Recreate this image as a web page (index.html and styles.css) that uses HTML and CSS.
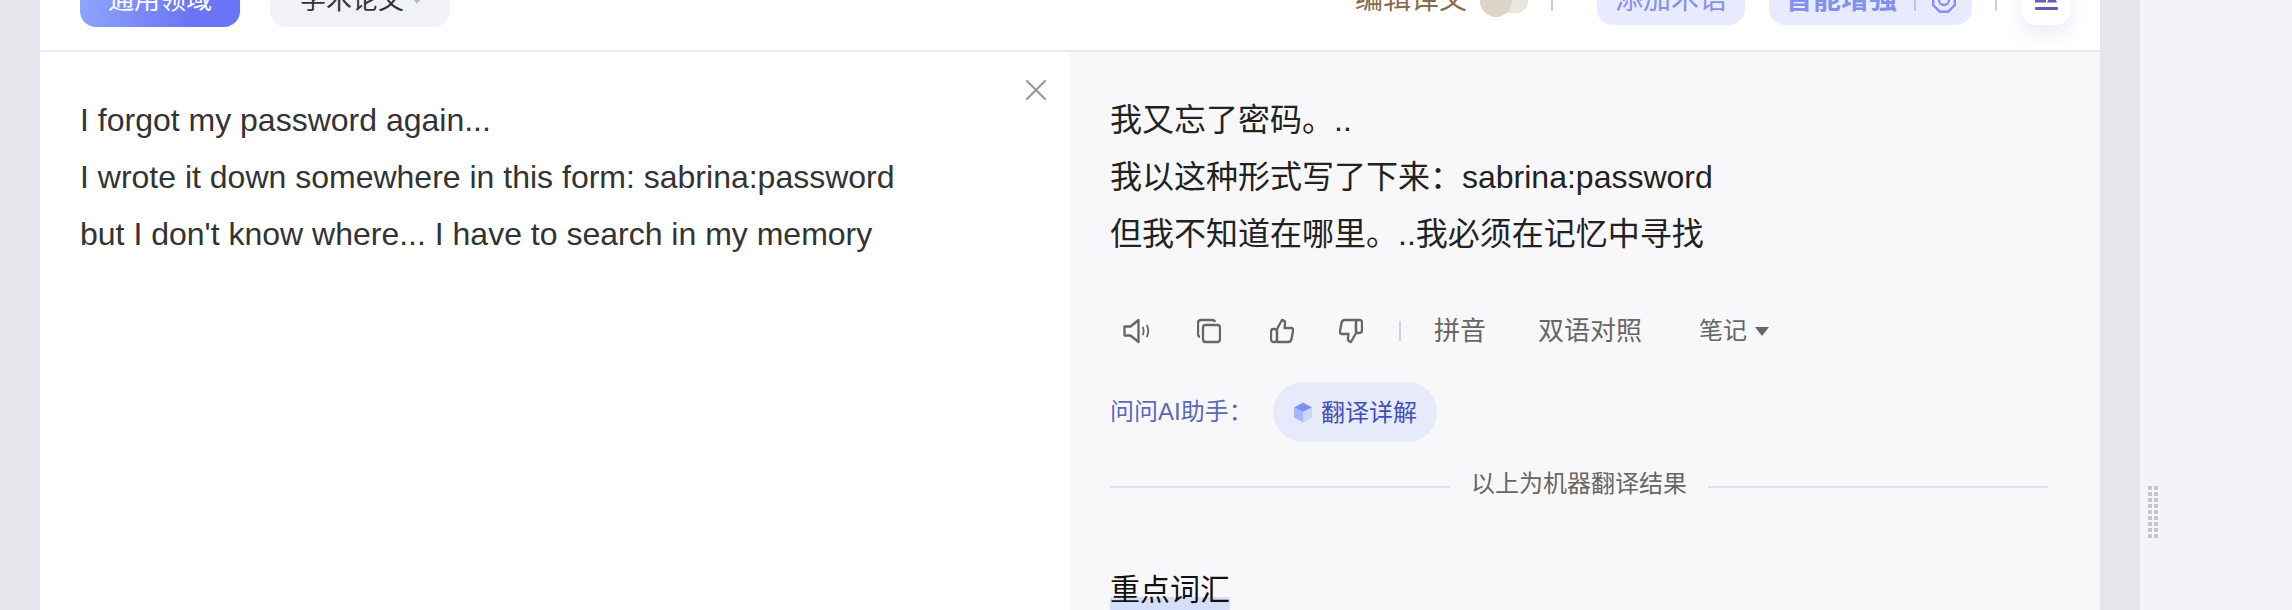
FILE: index.html
```html
<!DOCTYPE html>
<html lang="zh">
<head>
    <meta charset="UTF-8">
    <title>翻译</title>
    <link rel="stylesheet" href="styles.css">
</head>
<body>
    <div class="page">
        <div class="card">
            <div class="topbar">
                <div class="topbar-left">
                    <div class="domain-btn active">通用领域</div>
                    <div class="domain-btn">学术论文<span class="domain-arrow"></span></div>
                </div>
                <div class="topbar-right">
                    <div class="edit-label">编辑译文</div>
                    <div class="switch"><span class="switch-knob"></span></div>
                    <span class="vline first"></span>
                    <div class="pill">添加术语</div>
                    <div class="pill pill-strong">
                        <span>智能增强</span>
                        <span class="pill-sep"></span>
                        <svg class="pill-icon" width="24" height="26" viewBox="0 0 24 26" fill="none" stroke="#8391ee" stroke-width="2.400"><path d="M8 1.200h8l6.800 6.800v10L16 24.800H8L1.200 18V8z"/><circle cx="12" cy="13" r="5"/></svg>
                    </div>
                    <span class="vline"></span>
                    <div class="icon-btn">
                        <svg width="24" height="26" viewBox="0 0 24 26" fill="#5f5fb8"><path d="M18 8 13 18.500h10z"/><path d="M1 16h11v2.500H1z"/><rect x="1" y="23" width="23" height="3" rx="1"/></svg>
                    </div>
                </div>
            </div>
            <div class="panels">
                <div class="source">
                    <svg class="close-icon" width="22" height="22" viewBox="0 0 22 22" stroke="#999" stroke-width="2.200" stroke-linecap="round"><path d="M2 2 20 20M20 2 2 20"/></svg>
                    <p>I forgot my password again...</p>
                    <p>I wrote it down somewhere in this form: sabrina:password</p>
                    <p>but I don't know where... I have to search in my memory</p>
                </div>
                <div class="target">
                    <p>我又忘了密码。..</p>
                    <p>我以这种形式写了下来：sabrina:password</p>
                    <p>但我不知道在哪里。..我必须在记忆中寻找</p>
                    <div class="actions">
                        <svg class="act-speaker" width="28" height="26" viewBox="0 0 28 26" fill="none" stroke="#666" stroke-width="2.300" stroke-linejoin="round"><path d="M1.500 8.500h6L15.500 2v22l-8-6.500h-6z"/><path d="M20 9.500q1.500 3.500 0 7M24 7.500q2.500 5.500 0 11" stroke-width="1.800" stroke-linecap="round"/></svg>
                        <svg class="act-copy" width="24" height="26" viewBox="0 0 24 26" fill="none" stroke="#666" stroke-width="2.300"><path d="M3 19q-2-.5-2-3V5q0-3 3-3h11q2.500 0 3 2"/><rect x="6" y="7" width="17" height="17" rx="2.500"/></svg>
                        <svg class="act-up" width="24" height="26" viewBox="0 0 24 26" fill="none" stroke="#666" stroke-width="2.300" stroke-linejoin="round"><path d="M7 11 12 2q3.500.5 3 4l-.5 4H21q2.500 0 2 3l-1.500 8q-.5 3-3.500 3H7z"/><rect x="1" y="11" width="6" height="13" rx="2.500"/></svg>
                        <svg class="act-down" width="24" height="26" viewBox="0 0 24 26" fill="none" stroke="#666" stroke-width="2.300" stroke-linejoin="round"><path d="M17 15 12 24q-3.500-.5-3-4l.5-4H3q-2.500 0-2-3l1.500-8Q3 2 6 2h11z"/><rect x="17" y="2" width="6" height="13" rx="2.500"/></svg>
                        <span class="act-sep"></span>
                        <span class="act-text act-pinyin">拼音</span>
                        <span class="act-text act-dual">双语对照</span>
                        <span class="act-text act-notes">笔记</span>
                        <span class="act-arrow"></span>
                    </div>
                    <div class="ask-row">
                        <span class="ask-label">问问AI助手：</span>
                        <div class="ask-pill">
                            <svg width="20" height="22" viewBox="0 0 20 22"><path d="M10 1.500 19 6.500 10 11 1 6.500z" fill="#7f90f4"/><path d="M1 6.500 10 11v10.500L1 16.500z" fill="#a9b6f8"/><path d="M10 11 19 6.500v10L10 21.500z" fill="#cdd5fb"/></svg>
                            <span>翻译详解</span>
                        </div>
                    </div>
                    <div class="machine-note"><span>以上为机器翻译结果</span></div>
                    <div class="vocab-title">重点词汇</div>
                </div>
            </div>
        </div>
        <div class="gutter"></div>
        <div class="side">
            <div class="grip">
                <i></i><i></i><i></i><i></i><i></i><i></i><i></i><i></i><i></i>
                <i></i><i></i><i></i><i></i><i></i><i></i><i></i><i></i><i></i>
            </div>
        </div>
    </div>
</body>
</html>
```

FILE: styles.css
```css
html, body { margin: 0; height: 610px; overflow: hidden; }
body { font-family: "Liberation Sans", "Noto Sans CJK SC", sans-serif; background: #e5e6eb; color: #333; }
p { margin: 0; }

.page { display: flex; height: 610px; padding-left: 40px; }
.card { width: 2060px; flex: none; background: #fff; overflow: hidden; }
.gutter { width: 40px; flex: none; background: #e5e6eb; }
.side { flex: 1; background: #f2f4f8; padding: 486px 0 0 8px; display: flex; align-items: flex-start; }

/* top bar, the page is scrolled so its top is cut off */
.topbar { height: 50px; border-bottom: 2px solid #e9e8f3; display: flex; justify-content: space-between; }
.topbar-left { display: flex; align-items: flex-end; gap: 30px; padding: 0 0 23px 40px; }
.domain-btn { width: 180px; height: 54px; box-sizing: border-box; border-radius: 16px; background: #f1f2f8; color: #333; font-size: 26px; line-height: 54px; padding-left: 30px; display: flex; align-items: center; }
.domain-btn.active { width: 160px; padding-left: 28px; color: #fff; background: linear-gradient(100deg, #8fa8fb, #6a74f6 70%); }
.domain-arrow { width: 0; height: 0; margin-left: 7px; border: 6px solid transparent; border-top: 8px solid #b4b6d2; border-bottom: 0; }

.topbar-right { display: flex; align-items: flex-end; padding: 0 30px 0 0; }
.edit-label { color: #876b4e; font-size: 28px; line-height: 40px; margin: 0 13px 30px 0; }
.switch { width: 48px; height: 24px; background: #ebe5df; border-radius: 12px; position: relative; margin: 0 23px 37px 0; }
.switch-knob { display: block; width: 32px; height: 32px; border-radius: 50%; background: #ddd3c9; position: absolute; left: 0; top: -4px; }
.vline { width: 2px; height: 24px; background: #d0d0d4; margin: 0 25px 39px 23px; }
.vline.first { margin: 0 44px 39px 0; }
.pill { height: 52px; border-radius: 16px; background: #e8ebfd; color: #8391ee; font-size: 28px; line-height: 32px; padding: 2px 18px 0; display: flex; align-items: center; box-sizing: border-box; margin: 0 24px 25px 0; }
.pill-strong { font-weight: bold; padding: 2px 16px 0; margin-right: 0; }
.pill-sep { width: 2px; height: 22px; background: #b9c2f4; margin: 0 16px 0 17px; }
.pill-icon { flex: none; }
.icon-btn { width: 48px; height: 50px; box-sizing: border-box; padding-bottom: 15px; margin-bottom: 25px; display: flex; align-items: flex-end; justify-content: center; background: #fff; border-radius: 14px; box-shadow: 0 8px 20px #5f5fb822; }

/* two panels */
.panels { display: flex; height: 558px; }
.source { width: 1030px; box-sizing: border-box; padding: 40px 40px 0; position: relative; font-size: 32px; line-height: 57px; color: #333; }
.close-icon { position: absolute; right: 23px; top: 27px; }
.target { width: 1030px; box-sizing: border-box; padding: 40px 52px 0 40px; background: #f8f8fb; font-size: 32px; line-height: 57px; color: #222; }

.actions { display: flex; align-items: center; height: 40px; margin-top: 48px; color: #666; }
.actions svg { flex: none; }
.act-speaker { margin: 0 0 0 13px; }
.act-copy { margin-left: 46px; }
.act-up { margin-left: 49px; }
.act-down { margin-left: 45px; }
.act-sep { width: 2px; height: 20px; background: #d0d0d4; margin: 0 33px 0 36px; }
.act-text { font-size: 26px; line-height: 40px; }
.act-dual { margin-left: 52px; }
.act-notes { margin-left: 57px; font-size: 24px; }
.act-arrow { width: 0; height: 0; margin-left: 8px; border: 7px solid transparent; border-top: 9px solid #666; border-bottom: 0; }

.ask-row { display: flex; align-items: center; margin-top: 31px; height: 60px; }
.ask-label { font-size: 24px; line-height: 30px; color: #5b68b8; width: 163px; }
.ask-pill { width: 164px; height: 60px; box-sizing: border-box; padding-left: 20px; border-radius: 30px; background: #e6eafa; color: #4350b8; font-size: 24px; display: flex; align-items: center; gap: 8px; }

.machine-note { display: flex; align-items: center; gap: 21px; margin-top: 25px; height: 40px; color: #666; font-size: 24px; line-height: 40px; }
.machine-note span { padding-bottom: 6px; }
.machine-note::before, .machine-note::after { content: ""; flex: 1; height: 2px; background: #e0e0e4; }

.vocab-title { display: inline-block; margin-top: 63px; font-size: 30px; line-height: 40px; color: #111; background: linear-gradient(transparent 27px, #d5dffa 27px); }

.grip { display: grid; grid-template-rows: repeat(9, 4px); grid-auto-flow: column; grid-auto-columns: 4px; gap: 2px; }
.grip i { background: #c4c5d2; }
```
